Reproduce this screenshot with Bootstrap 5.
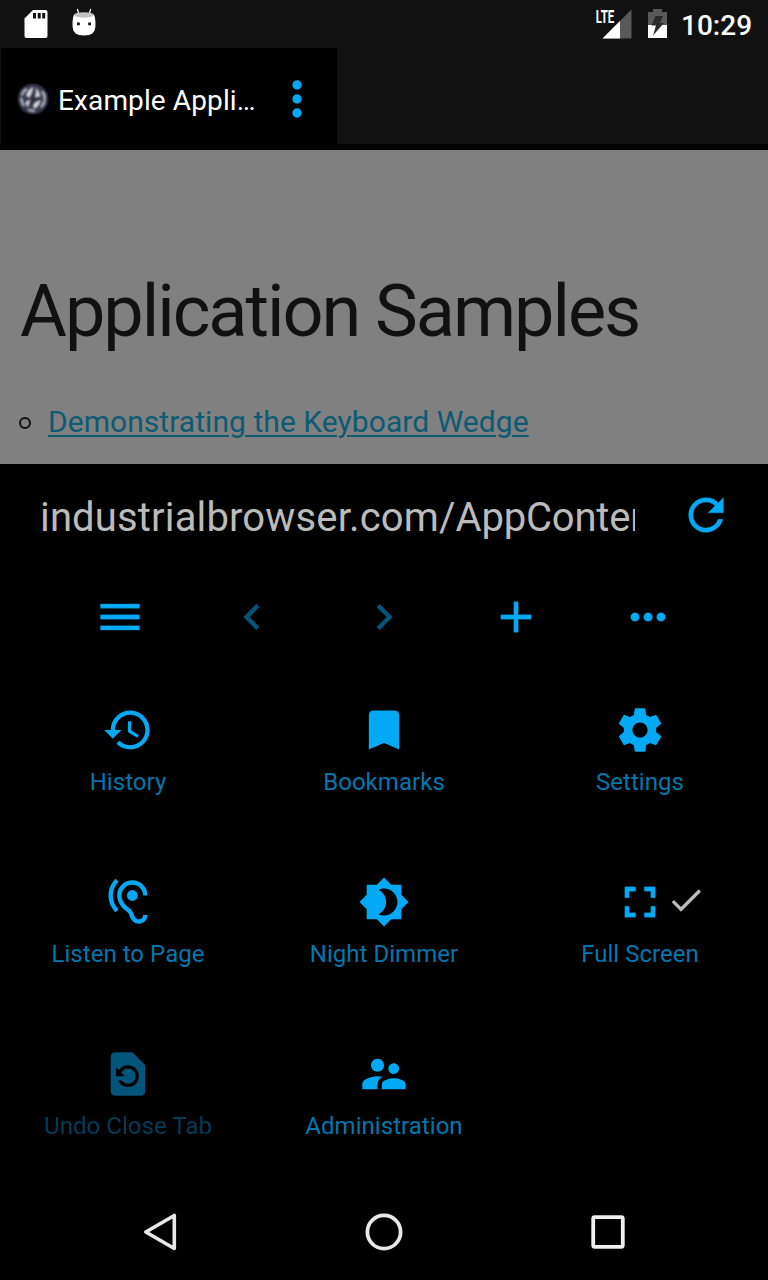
<!DOCTYPE html>
<html lang="en">
<head>
<meta charset="utf-8">
<meta name="viewport" content="width=device-width, initial-scale=1">
<title>Industrial Browser</title>
<link href="https://cdn.jsdelivr.net/npm/bootstrap@5.3.0/dist/css/bootstrap.min.css" rel="stylesheet">
<style>
body{font-family:Roboto,sans-serif;background:#000;color:#fff;width:768px;height:1280px;overflow:hidden}
svg{display:block;flex:none}
.ic{width:52px;height:52px;fill:currentColor}
.statusbar{height:48px;background:#111;padding:0 17px 0 20px}
.clock{font-size:28px;font-weight:500;line-height:48px;width:70px;margin-left:13px;padding-top:3px}
.tabstrip{height:96px;background:#111;padding-left:1px}
.tab-current{width:336px;background:#000;padding:6px 12px 0 16px}
.tab-title{font-size:28px;letter-spacing:.12px;width:203px;margin-left:9px;line-height:36px;padding-top:3px}
.accent{color:#03a9f4}
.page-view{height:320px;background:#808080;border-top:6px solid #000;padding:114px 18px 0}
.page-view h1{font-size:72px;font-weight:400;line-height:96px;letter-spacing:-2.03px;color:#111;margin:0 0 0 2px}
.sample-list{margin-top:40px;color:#111;line-height:44px}
.ring{width:12px;height:12px;border:2px solid #111;border-radius:50%;margin:2px 17px 0 1px}
.sample-list a{font-size:30px;letter-spacing:.05px;color:#0e5a73;text-decoration:underline;text-decoration-thickness:2px;text-underline-offset:3px}
.urlbar{height:106px;padding:0 36px 4px 40px}
.url{font-size:40px;letter-spacing:-.2px;line-height:60px;width:595px;color:#bbb;padding-top:6px}
.url-host{letter-spacing:.15px}
.tools{height:94px;padding:0 54px}
.faint{opacity:.5}
.tile{height:172px;padding-top:40px}
.tile-label{font-size:24px;letter-spacing:.04px;line-height:30px;margin-top:11px;color:#0277ad;white-space:nowrap}
.tick{width:40px;height:40px;fill:#bbb;top:4px}
.navkeys{height:96px;margin-top:4px;padding:0 48px}
</style>
</head>
<body>
<header>
  <div class="statusbar d-flex align-items-center">
    <svg width="80" height="48" viewBox="20 0 80 48">
      <path fill="#fff" d="M33 10h12.500q2 0 2 2v24q0 2-2 2h-19q-2 0-2-2V18.500z"/>
      <path fill="#111" d="M33 13h3v5.500h-3zm4.700 0h3v5.500h-3zm4.500 0h3v5.500h-3z"/>
      <path stroke="#fff" stroke-width="1.300" d="M77.300 9l1.500 5M90.800 9l-1.600 5"/>
      <path fill="#fff" d="M74 14.500h20q2 5 1.300 13-.5 8-11.300 8t-11.300-8q-.7-8 1.300-13z"/>
      <ellipse cx="84" cy="15" rx="9.700" ry="2.700" fill="#c2c2c2"/>
      <path fill="#111" d="M77 22.500h2.800v2.800H77zm11.200 0H91v2.800h-2.800z"/>
    </svg>
    <svg class="ms-auto" width="74" height="48" viewBox="594 0 74 48">
      <path fill="#595959" d="M631.500 9.500v29h-29z"/>
      <path fill="#fff" d="M620 21v17.500h-17.500z"/>
      <text x="595.800" y="22.700" font-size="17.500" font-weight="700" fill="#fff" textLength="18.500" lengthAdjust="spacingAndGlyphs">LTE</text>
      <path fill="#595959" d="M648 12h5V9h9v3h5v13h-19z"/>
      <path fill="#fff" d="M648 25h19v13h-19z"/>
      <path fill="#2a2a2a" d="M655.500 16h7.500l-3 7h4l-11 12.500 3-10h-4.500z"/>
    </svg>
    <div class="clock text-nowrap">10:29</div>
  </div>
  <div class="tabstrip d-flex">
    <div class="tab-current d-flex align-items-center">
      <svg width="32" height="32" viewBox="0 0 32 32">
        <defs>
          <radialGradient id="globe"><stop offset="0" stop-color="#2b2e3a"/><stop offset=".8" stop-color="#3a3e52"/><stop offset="1" stop-color="#181a26"/></radialGradient>
          <filter id="soft"><feGaussianBlur stdDeviation=".8"/></filter>
        </defs>
        <circle cx="16" cy="16" r="15.800" fill="url(#globe)"/>
        <g filter="url(#soft)" fill="#d6d6dc">
          <path d="M16.500 4q-6 2-7.500 9l3.500 2q3-5 4-11zM19 4.500q4 5 4.500 9l-6 1q2-5 1.500-10zM24 17q-2 7-7 9l-1-4q2-4 8-5zM14 17q-2 2-2.500 7-3-1-3-5 2-2 5.500-2z"/>
          <path fill="none" stroke="#c4c5d0" stroke-width="2.200" stroke-linecap="round" d="M9 6.500q-3 2-4 5M4.500 15.500q0 4 2 6.500M25.500 9q2.500 3 2 7M27.500 18q-.5 3-3 5.500M12 27l5 1"/>
        </g>
      </svg>
      <div class="tab-title text-truncate">Example Application</div>
      <svg class="accent ms-auto" width="56" height="56" viewBox="0 0 24 24" fill="currentColor"><path d="M12 8a2 2 0 1 0 0-4 2 2 0 0 0 0 4zm0 2a2 2 0 1 0 0 4 2 2 0 0 0 0-4zm0 6a2 2 0 1 0 0 4 2 2 0 0 0 0-4z"/></svg>
    </div>
  </div>
</header>
<main>
  <section class="page-view">
    <h1>Application Samples</h1>
    <div class="sample-list d-flex align-items-center"><span class="ring"></span><a href="#">Demonstrating the Keyboard Wedge</a></div>
  </section>
  <section class="accent">
    <div class="urlbar d-flex align-items-center justify-content-between">
      <div class="url overflow-hidden text-nowrap"><span class="url-host">industrialbrowser.com/</span>AppContent</div>
      <svg class="ic" viewBox="0 0 24 24"><path d="M17.650 6.350A7.958 7.958 0 0 0 12 4c-4.420 0-7.990 3.580-7.990 8s3.570 8 7.990 8c3.730 0 6.840-2.550 7.730-6h-2.080A5.990 5.990 0 0 1 12 18c-3.310 0-6-2.690-6-6s2.690-6 6-6c1.660 0 3.140.69 4.220 1.780L13 11h7V4l-2.350 2.350z" stroke="currentColor" stroke-width=".2"/></svg>
    </div>
    <div class="tools d-flex align-items-center">
      <div class="col d-flex justify-content-center"><svg class="ic" viewBox="0 0 24 24"><path d="M3 18h18v-2H3v2zm0-5h18v-2H3v2zm0-7v2h18V6H3z" stroke="currentColor" stroke-width=".15"/></svg></div>
      <div class="col d-flex justify-content-center"><svg class="ic faint" viewBox="0 0 24 24"><path d="M15.410 7.410L14 6l-6 6 6 6 1.410-1.410L10.830 12z"/></svg></div>
      <div class="col d-flex justify-content-center"><svg class="ic faint" viewBox="0 0 24 24"><path d="M10 6L8.590 7.410 13.170 12l-4.580 4.590L10 18l6-6z"/></svg></div>
      <div class="col d-flex justify-content-center"><svg class="ic" viewBox="0 0 24 24"><path d="M19 13h-6v6h-2v-6H5v-2h6V5h2v6h6v2z" stroke="currentColor" stroke-width=".15"/></svg></div>
      <div class="col d-flex justify-content-center"><svg class="ic" viewBox="0 0 24 24"><path d="M6 10a2 2 0 1 0 0 4 2 2 0 0 0 0-4zm12 0a2 2 0 1 0 0 4 2 2 0 0 0 0-4zm-6 0a2 2 0 1 0 0 4 2 2 0 0 0 0-4z" stroke="currentColor" stroke-width=".15"/></svg></div>
    </div>
    <div class="row g-0 row-cols-3">
      <div class="col tile d-flex flex-column align-items-center">
        <svg class="ic" viewBox="0 0 24 24"><path d="M13 3a9 9 0 0 0-9 9H1l3.890 3.890.07.14L9 12H6c0-3.870 3.130-7 7-7s7 3.130 7 7-3.130 7-7 7c-1.930 0-3.680-.79-4.940-2.060l-1.420 1.420A8.954 8.954 0 0 0 13 21a9 9 0 0 0 0-18zm-1 5v5l4.280 2.540.72-1.210-3.500-2.080V8H12z"/></svg>
        <div class="tile-label">History</div>
      </div>
      <div class="col tile d-flex flex-column align-items-center">
        <svg class="ic" viewBox="0 0 24 24"><path d="M17 3H7c-1.100 0-1.990.9-1.990 2L5 21l7-3 7 3V5c0-1.100-.9-2-2-2z"/></svg>
        <div class="tile-label">Bookmarks</div>
      </div>
      <div class="col tile d-flex flex-column align-items-center">
        <svg class="ic" viewBox="0 0 24 24"><path d="M19.430 12.980c.04-.32.07-.64.07-.98s-.03-.66-.07-.98l2.110-1.650c.19-.15.24-.42.12-.64l-2-3.460c-.12-.22-.39-.3-.61-.22l-2.490 1c-.52-.4-1.080-.73-1.690-.98l-.38-2.650A.488.488 0 0 0 14 2h-4c-.25 0-.46.18-.49.42l-.38 2.650c-.61.25-1.170.59-1.690.98l-2.490-1c-.23-.09-.49 0-.61.22l-2 3.460c-.13.22-.07.49.12.64l2.110 1.650c-.04.32-.07.65-.07.98s.03.66.07.98l-2.110 1.650c-.19.15-.24.42-.12.64l2 3.460c.12.22.39.3.61.22l2.490-1c.52.4 1.080.73 1.690.98l.38 2.650c.03.24.24.42.49.42h4c.25 0 .46-.18.49-.42l.38-2.650c.61-.25 1.170-.59 1.690-.98l2.490 1c.23.09.49 0 .61-.22l2-3.460c.12-.22.07-.49-.12-.64l-2.110-1.650zM12 15.500c-1.930 0-3.500-1.570-3.500-3.500s1.570-3.500 3.500-3.500 3.500 1.570 3.500 3.500-1.570 3.500-3.500 3.500z"/></svg>
        <div class="tile-label">Settings</div>
      </div>
      <div class="col tile d-flex flex-column align-items-center">
        <svg class="ic" viewBox="0 0 24 24"><path d="M17 20c-.29 0-.56-.06-.76-.15-.71-.37-1.210-.88-1.710-2.380-.51-1.560-1.470-2.290-2.390-3-.79-.61-1.610-1.240-2.320-2.530C9.290 10.980 9 9.930 9 9c0-2.800 2.200-5 5-5s5 2.200 5 5h2c0-3.930-3.070-7-7-7S7 5.070 7 9c0 1.260.38 2.650 1.070 3.900.91 1.650 1.980 2.480 2.850 3.150.81.62 1.390 1.070 1.710 2.050.6 1.820 1.370 2.840 2.730 3.550A3.999 3.999 0 0 0 21 18h-2c0 1.100-.9 2-2 2zM7.640 2.640L6.220 1.220C4.230 3.210 3 5.960 3 9s1.230 5.790 3.220 7.780l1.410-1.410C6.010 13.740 5 11.490 5 9s1.010-4.740 2.640-6.360zM11.500 9a2.500 2.500 0 0 0 5 0 2.500 2.500 0 0 0-5 0z"/></svg>
        <div class="tile-label">Listen to Page</div>
      </div>
      <div class="col tile d-flex flex-column align-items-center">
        <svg class="ic" viewBox="0 0 24 24"><path d="M20 8.690V4h-4.690L12 .69 8.690 4H4v4.690L.69 12 4 15.310V20h4.690L12 23.310 15.310 20H20v-4.690L23.310 12 20 8.690zM12 18.200c-.89 0-1.740-.2-2.500-.55C11.560 16.500 13 14.420 13 12s-1.440-4.500-3.500-5.650C10.260 6 11.110 5.800 12 5.800c3.400 0 6.200 2.770 6.200 6.200s-2.800 6.200-6.200 6.200z"/></svg>
        <div class="tile-label">Night Dimmer</div>
      </div>
      <div class="col tile d-flex flex-column align-items-center">
        <div class="position-relative">
          <svg class="ic" viewBox="0 0 24 24"><path d="M7 14H5v5h5v-2H7v-3zm-2-4h2V7h3V5H5v5zm12 7h-3v2h5v-5h-2v3zM14 5v2h3v3h2V5h-5z" stroke="currentColor" stroke-width=".15"/></svg>
          <svg class="tick position-absolute start-100" viewBox="0 0 24 24"><path d="M9 16.170L4.830 12l-1.420 1.410L9 19 21 7l-1.410-1.410z"/></svg>
        </div>
        <div class="tile-label">Full Screen</div>
      </div>
      <div class="col tile d-flex flex-column align-items-center faint">
        <svg class="ic" viewBox="0 0 24 24"><path d="M14 2H6c-1.100 0-1.990.9-1.990 2L4 20c0 1.100.89 2 1.990 2H18c1.100 0 2-.9 2-2V8l-6-6zm-2 16c-2.050 0-3.810-1.240-4.580-3h1.710c.63.9 1.680 1.500 2.870 1.500 1.930 0 3.500-1.570 3.500-3.500S13.930 9.500 12 9.500c-1.350 0-2.520.78-3.100 1.900l1.600 1.600h-4V9l1.300 1.300C8.690 8.920 10.230 8 12 8c2.760 0 5 2.240 5 5s-2.240 5-5 5z"/></svg>
        <div class="tile-label">Undo Close Tab</div>
      </div>
      <div class="col tile d-flex flex-column align-items-center">
        <svg class="ic" viewBox="0 0 24 24"><path d="M16.500 12c1.380 0 2.490-1.120 2.490-2.500S17.880 7 16.500 7a2.500 2.500 0 0 0 0 5zM9 11c1.660 0 2.990-1.340 2.990-3S10.660 5 9 5 6 6.340 6 8s1.340 3 3 3zm7.500 3c-1.830 0-5.500.92-5.500 2.750V19h11v-2.250c0-1.830-3.670-2.750-5.500-2.750zM9 13c-2.330 0-7 1.170-7 3.500V19h7v-2.250c0-.85.33-2.340 2.370-3.470C10.500 13.100 9.660 13 9 13z"/></svg>
        <div class="tile-label">Administration</div>
      </div>
    </div>
  </section>
</main>
<footer class="navkeys d-flex align-items-center">
  <div class="col d-flex justify-content-center"><svg width="48" height="48" viewBox="0 0 48 48" fill="none" stroke="#e8e8e8" stroke-width="3.600" stroke-linejoin="round"><path d="M38.300 7.500v33L9.800 24z"/></svg></div>
  <div class="col d-flex justify-content-center"><svg width="48" height="48" viewBox="0 0 48 48" fill="none" stroke="#e8e8e8" stroke-width="3.800"><circle cx="24" cy="24" r="16.600"/></svg></div>
  <div class="col d-flex justify-content-center"><svg width="48" height="48" viewBox="0 0 48 48" fill="none" stroke="#f0f0f0" stroke-width="3.800"><rect x="9.200" y="9.200" width="29.600" height="29.600" rx="1.500"/></svg></div>
</footer>
<script src="https://cdn.jsdelivr.net/npm/bootstrap@5.3.0/dist/js/bootstrap.bundle.min.js"></script>
</body>
</html>
